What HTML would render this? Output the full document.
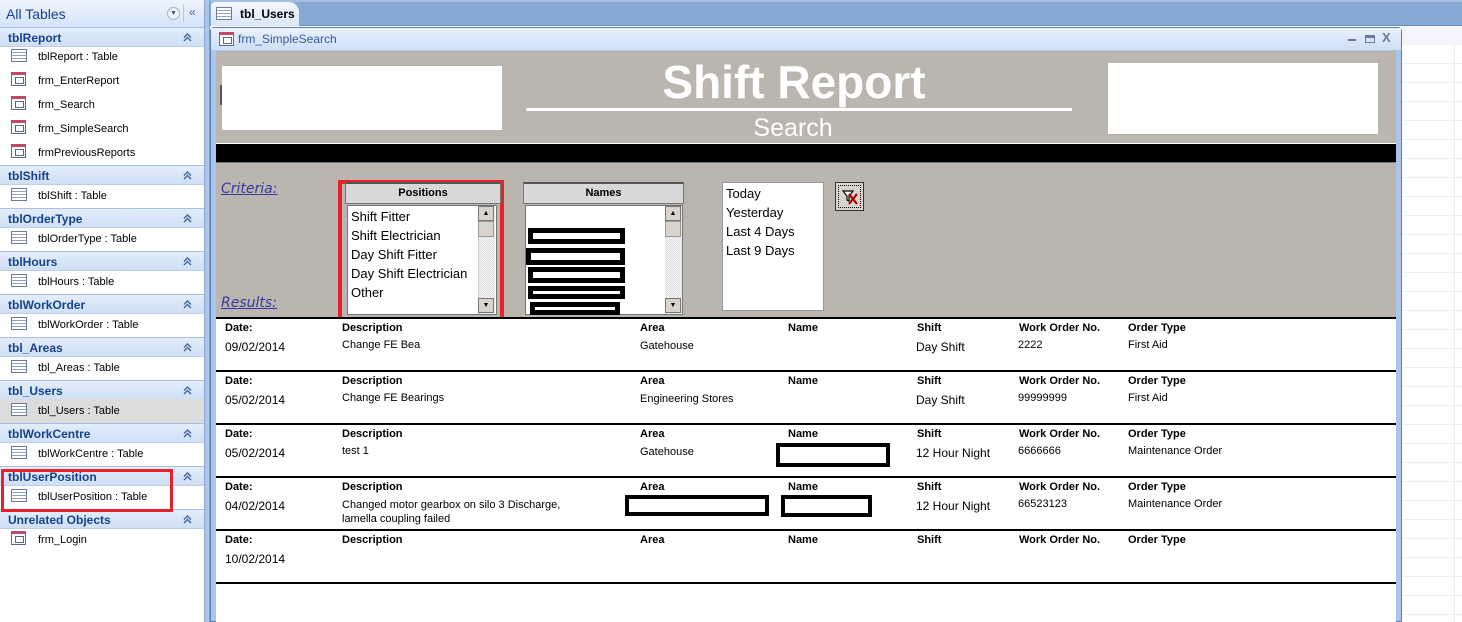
<!DOCTYPE html>
<html><head><meta charset="utf-8"><style>
*{margin:0;padding:0;box-sizing:border-box}
body{width:1462px;height:622px;overflow:hidden;position:relative;background:#fff;font-family:"Liberation Sans",Arial,sans-serif;font-size:11px}
.a{position:absolute}
.gh{position:absolute;left:0;width:204px;height:20px;background:linear-gradient(#e3edfb,#cfdff5);border-top:1px solid #a9c0e0;border-bottom:1px solid #bcd0ea;color:#15428b;font-weight:bold;font-size:12px;padding:3px 0 0 8px}
.gh svg{position:absolute;right:12px;top:5px}
.it{position:absolute;left:0;width:204px;height:24px;color:#000;font-size:11px;padding:6px 0 0 38px}
.ic{position:absolute;left:11px;top:4px;width:16px;height:13px;border:1px solid #6b7a99;background:repeating-linear-gradient(#fff 0 2px,#8fa2c4 2px 3px)}
.fi{position:absolute;left:11px;top:3px;width:15px;height:14px;border:1px solid #5a6688;border-top:3px solid #c04a6a;background:#fff}
.fi::after{content:"";position:absolute;left:3px;top:2px;width:7px;height:5px;border:1px solid #5a6688}
.row{position:absolute;left:216px;width:1180px;height:53px;border-top:2px solid #000;background:#fff}
.row .h{position:absolute;top:3px;font-weight:bold;font-size:11px}
.row .v{position:absolute;font-size:11px}
.red{position:absolute;border:3px solid #000;background:#fff}
</style></head><body>
<svg width="0" height="0" style="position:absolute"><defs><symbol id="ch" viewBox="0 0 9 9"><path d="M1 4.5L4.5 1L8 4.5M1 8L4.5 4.5L8 8" fill="none" stroke="#4a6a9a" stroke-width="1.5"/></symbol></defs></svg>
<div class="a" style="left:0;top:0;width:205px;height:622px;background:#fff;border-right:1px solid #8ea8cf"></div>
<div class="a" style="left:0;top:0;width:204px;height:28px;background:linear-gradient(#eef4fd,#d4e3f8);border-bottom:1px solid #9fb9de;color:#15428b;font-size:14px;padding:6px 0 0 6px">All Tables
<span class="a" style="left:167px;top:7px;width:13px;height:13px;border-radius:50%;border:1px solid #9fb2cf;background:#eef3fb;font-size:7px;text-align:center;line-height:12px;color:#3a5a8a">▼</span>
<span class="a" style="left:183px;top:4px;width:1px;height:18px;background:#b7c9e2"></span>
<span class="a" style="left:189px;top:5px;font-size:12px;color:#4a6a9a">«</span></div>
<div class="gh" style="top:27px">tblReport<svg width="9" height="9"><use href="#ch"/></svg></div>
<div class="it" style="top:45px"><i class="ic"></i>tblReport : Table</div>
<div class="it" style="top:69px"><i class="fi"></i>frm_EnterReport</div>
<div class="it" style="top:93px"><i class="fi"></i>frm_Search</div>
<div class="it" style="top:117px"><i class="fi"></i>frm_SimpleSearch</div>
<div class="it" style="top:141px"><i class="fi"></i>frmPreviousReports</div>
<div class="gh" style="top:165px">tblShift<svg width="9" height="9"><use href="#ch"/></svg></div>
<div class="it" style="top:184px"><i class="ic"></i>tblShift : Table</div>
<div class="gh" style="top:208px">tblOrderType<svg width="9" height="9"><use href="#ch"/></svg></div>
<div class="it" style="top:227px"><i class="ic"></i>tblOrderType : Table</div>
<div class="gh" style="top:251px">tblHours<svg width="9" height="9"><use href="#ch"/></svg></div>
<div class="it" style="top:270px"><i class="ic"></i>tblHours : Table</div>
<div class="gh" style="top:294px">tblWorkOrder<svg width="9" height="9"><use href="#ch"/></svg></div>
<div class="it" style="top:313px"><i class="ic"></i>tblWorkOrder : Table</div>
<div class="gh" style="top:337px">tbl_Areas<svg width="9" height="9"><use href="#ch"/></svg></div>
<div class="it" style="top:356px"><i class="ic"></i>tbl_Areas : Table</div>
<div class="gh" style="top:380px">tbl_Users<svg width="9" height="9"><use href="#ch"/></svg></div>
<div class="it" style="top:399px;background:#dcdcdc"><i class="ic"></i>tbl_Users : Table</div>
<div class="gh" style="top:423px">tblWorkCentre<svg width="9" height="9"><use href="#ch"/></svg></div>
<div class="it" style="top:442px"><i class="ic"></i>tblWorkCentre : Table</div>
<div class="gh" style="top:466px">tblUserPosition<svg width="9" height="9"><use href="#ch"/></svg></div>
<div class="it" style="top:485px"><i class="ic"></i>tblUserPosition : Table</div>
<div class="gh" style="top:509px">Unrelated Objects<svg width="9" height="9"><use href="#ch"/></svg></div>
<div class="it" style="top:528px"><i class="fi"></i>frm_Login</div>
<div class="a" style="left:1px;top:469px;width:172px;height:43px;border:3px solid #e8212a"></div>
<div class="a" style="left:205px;top:0;width:5px;height:622px;background:#aac4ea;border-right:1px solid #7d9cc8"></div>
<div class="a" style="left:210px;top:0;width:1252px;height:26px;background:#87a9d6;border-top:2px solid #a6bfe2;border-bottom:1px solid #6a8fc2"></div>
<div class="a" style="left:211px;top:2px;width:88px;height:24px;background:linear-gradient(#f4f8fe,#d8e6f8);border-radius:4px 10px 0 0;font-weight:bold;font-size:12px;padding:5px 0 0 29px;color:#000"><i class="ic" style="left:5px;top:5px"></i>tbl_Users</div>
<div class="a" style="left:1402px;top:26px;width:60px;height:596px;background:#fff;background-image:linear-gradient(#eceef5 1px,transparent 1px),linear-gradient(90deg,transparent 52px,#eceef5 52px,#eceef5 53px,transparent 53px);background-size:60px 19px,60px 100%;background-position:0 18px,0 0"></div>
<div class="a" style="left:1402px;top:26px;width:60px;height:19px;background:#f4f5fc"></div>
<div class="a" style="left:210px;top:27px;width:1192px;height:595px;background:#aac4ea;border:1px solid #5c7fb2;border-radius:4px 4px 0 0"></div>
<div class="a" style="left:211px;top:28px;width:1190px;height:22px;background:linear-gradient(#eaf1fc,#cddff6);color:#3a5a9a;font-size:12px;padding:4px 0 0 27px">frm_SimpleSearch<i class="fi" style="left:8px;top:4px"></i>
<span class="a" style="left:1137px;top:11px;width:8px;height:2px;background:#6a7a99"></span>
<span class="a" style="left:1154px;top:7px;width:10px;height:8px;border:1px solid #6a7a99;border-top:3px solid #6a7a99"></span>
<span class="a" style="left:1171px;top:2px;color:#6a7a99;font-size:13px;font-weight:bold">X</span></div>
<div class="a" style="left:216px;top:51px;width:1180px;height:571px;background:#fff"></div>
<div class="a" style="left:216px;top:51px;width:1180px;height:268px;background:#bab6af"></div>
<div class="a" style="left:222px;top:66px;width:280px;height:64px;background:#fff"></div>
<div class="a" style="left:220px;top:85px;width:2px;height:20px;background:#555"></div>
<div class="a" style="left:1108px;top:63px;width:270px;height:71px;background:#fff"></div>
<div class="a" style="left:526px;top:57px;width:536px;text-align:center;color:#fff;font-weight:bold;font-size:46px;line-height:50px">Shift Report</div>
<div class="a" style="left:526px;top:108px;width:546px;height:3px;background:#fff"></div>
<div class="a" style="left:526px;top:113px;width:534px;text-align:center;color:#fff;font-size:25px;line-height:30px">Search</div>
<div class="a" style="left:216px;top:143px;width:1180px;height:20px;background:#000;border-top:1px solid #fff;border-bottom:1px solid #777"></div>
<div class="a" style="left:221px;top:181px;color:#3a3aa0;font-family:'DejaVu Sans',sans-serif;font-style:italic;font-size:14px;text-decoration:underline">Criteria:</div>
<div class="a" style="left:221px;top:295px;color:#3a3aa0;font-family:'DejaVu Sans',sans-serif;font-style:italic;font-size:14px;text-decoration:underline">Results:</div>
<div class="a" style="left:338px;top:180px;width:166px;height:142px;border:4px solid #e8212a"></div>
<div class="a" style="left:345px;top:182px;width:156px;height:22px;background:#d8d8d8;border:1px solid #777;border-top:2px solid #555;font-weight:bold;text-align:center;padding-top:3px">Positions</div>
<div class="a" style="left:347px;top:205px;width:150px;height:110px;background:#fff;border:1px solid #777;font-size:13px;line-height:19px;padding:1px 0 0 3px">Shift Fitter<br>Shift Electrician<br>Day Shift Fitter<br>Day Shift Electrician<br>Other</div>
<div class="a" style="left:478px;top:206px;width:17px;height:108px;background:repeating-conic-gradient(#ddd 0 25%,#f6f6f6 0 50%) 0 0/2px 2px;border-left:1px solid #ccc"></div>
<div class="a" style="left:478px;top:206px;width:16px;height:15px;background:#d8d4cc;border:1px solid #777;font-size:7px;text-align:center;line-height:13px">▲</div>
<div class="a" style="left:478px;top:221px;width:16px;height:16px;background:#d8d4cc;border:1px solid #999"></div>
<div class="a" style="left:478px;top:298px;width:16px;height:15px;background:#d8d4cc;border:1px solid #777;font-size:7px;text-align:center;line-height:13px">▼</div>
<div class="a" style="left:523px;top:182px;width:161px;height:22px;background:#d8d8d8;border:1px solid #777;border-top:2px solid #555;font-weight:bold;text-align:center;padding-top:3px">Names</div>
<div class="a" style="left:525px;top:205px;width:158px;height:110px;background:#fff;border:1px solid #777"></div>
<div class="a" style="left:665px;top:206px;width:17px;height:108px;background:repeating-conic-gradient(#ddd 0 25%,#f6f6f6 0 50%) 0 0/2px 2px"></div>
<div class="a" style="left:665px;top:206px;width:16px;height:15px;background:#d8d4cc;border:1px solid #777;font-size:7px;text-align:center;line-height:13px">▲</div>
<div class="a" style="left:665px;top:221px;width:16px;height:16px;background:#d8d4cc;border:1px solid #999"></div>
<div class="a" style="left:665px;top:298px;width:16px;height:15px;background:#d8d4cc;border:1px solid #777;font-size:7px;text-align:center;line-height:13px">▼</div>
<div class="red" style="left:528px;top:228px;width:97px;height:16px;border-width:5px"></div>
<div class="red" style="left:526px;top:248px;width:99px;height:17px;border-width:5px"></div>
<div class="red" style="left:528px;top:267px;width:97px;height:16px;border-width:5px"></div>
<div class="red" style="left:528px;top:286px;width:97px;height:13px;border-width:5px"></div>
<div class="red" style="left:530px;top:302px;width:90px;height:13px;border-width:5px"></div>
<div class="a" style="left:722px;top:182px;width:102px;height:129px;background:#fff;border:1px solid #999;font-size:13px;line-height:19px;padding:1px 0 0 3px">Today<br>Yesterday<br>Last 4 Days<br>Last 9 Days</div>
<div class="a" style="left:835px;top:182px;width:29px;height:29px;background:#d8d4cc;border:1px solid #333;outline:1px dotted #000;outline-offset:-4px">
<svg class="a" style="left:5px;top:5px" width="18" height="18" viewBox="0 0 18 18"><path d="M2 3H12L8 8V13L6 12V8Z" fill="#fff" stroke="#000" stroke-width="1.2"/><path d="M8 6L16 16M16 6L8 16" stroke="#a00" stroke-width="2.2"/></svg></div>
<div class="row" style="top:317px">
<span class="h" style="left:9px">Date:</span><span class="h" style="left:126px">Description</span><span class="h" style="left:424px">Area</span><span class="h" style="left:572px">Name</span><span class="h" style="left:701px">Shift</span><span class="h" style="left:803px">Work Order No.</span><span class="h" style="left:912px">Order Type</span>
<span class="v" style="left:9px;top:21px;font-size:12px">09/02/2014</span><span class="v" style="left:126px;top:20px">Change FE Bea</span><span class="v" style="left:424px;top:21px">Gatehouse</span><span class="v" style="left:700px;top:21px;font-size:12px">Day Shift</span><span class="v" style="left:802px;top:20px">2222</span><span class="v" style="left:912px;top:20px">First Aid</span></div>
<div class="row" style="top:370px">
<span class="h" style="left:9px">Date:</span><span class="h" style="left:126px">Description</span><span class="h" style="left:424px">Area</span><span class="h" style="left:572px">Name</span><span class="h" style="left:701px">Shift</span><span class="h" style="left:803px">Work Order No.</span><span class="h" style="left:912px">Order Type</span>
<span class="v" style="left:9px;top:21px;font-size:12px">05/02/2014</span><span class="v" style="left:126px;top:20px">Change FE Bearings</span><span class="v" style="left:424px;top:21px">Engineering Stores</span><span class="v" style="left:700px;top:21px;font-size:12px">Day Shift</span><span class="v" style="left:802px;top:20px">99999999</span><span class="v" style="left:912px;top:20px">First Aid</span></div>
<div class="row" style="top:423px">
<span class="h" style="left:9px">Date:</span><span class="h" style="left:126px">Description</span><span class="h" style="left:424px">Area</span><span class="h" style="left:572px">Name</span><span class="h" style="left:701px">Shift</span><span class="h" style="left:803px">Work Order No.</span><span class="h" style="left:912px">Order Type</span>
<span class="v" style="left:9px;top:21px;font-size:12px">05/02/2014</span><span class="v" style="left:126px;top:20px">test 1</span><span class="v" style="left:424px;top:21px">Gatehouse</span><span class="v" style="left:700px;top:21px;font-size:12px">12 Hour Night</span><span class="v" style="left:802px;top:20px">6666666</span><span class="v" style="left:912px;top:20px">Maintenance Order</span>
<div class="red" style="left:560px;top:18px;width:114px;height:24px;border-width:4px"></div></div>
<div class="row" style="top:476px">
<span class="h" style="left:9px">Date:</span><span class="h" style="left:126px">Description</span><span class="h" style="left:424px">Area</span><span class="h" style="left:572px">Name</span><span class="h" style="left:701px">Shift</span><span class="h" style="left:803px">Work Order No.</span><span class="h" style="left:912px">Order Type</span>
<span class="v" style="left:9px;top:21px;font-size:12px">04/02/2014</span><span class="v" style="left:126px;top:20px;line-height:14px">Changed motor gearbox on silo 3 Discharge,<br>lamella coupling failed</span><span class="v" style="left:700px;top:21px;font-size:12px">12 Hour Night</span><span class="v" style="left:802px;top:20px">66523123</span><span class="v" style="left:912px;top:20px">Maintenance Order</span>
<div class="red" style="left:409px;top:17px;width:144px;height:21px;border-width:4px"></div>
<div class="red" style="left:565px;top:17px;width:91px;height:22px;border-width:4px"></div></div>
<div class="row" style="top:529px">
<span class="h" style="left:9px">Date:</span><span class="h" style="left:126px">Description</span><span class="h" style="left:424px">Area</span><span class="h" style="left:572px">Name</span><span class="h" style="left:701px">Shift</span><span class="h" style="left:803px">Work Order No.</span><span class="h" style="left:912px">Order Type</span>
<span class="v" style="left:9px;top:21px;font-size:12px">10/02/2014</span></div>
<div class="a" style="left:216px;top:582px;width:1180px;height:2px;background:#000"></div>
</body></html>
